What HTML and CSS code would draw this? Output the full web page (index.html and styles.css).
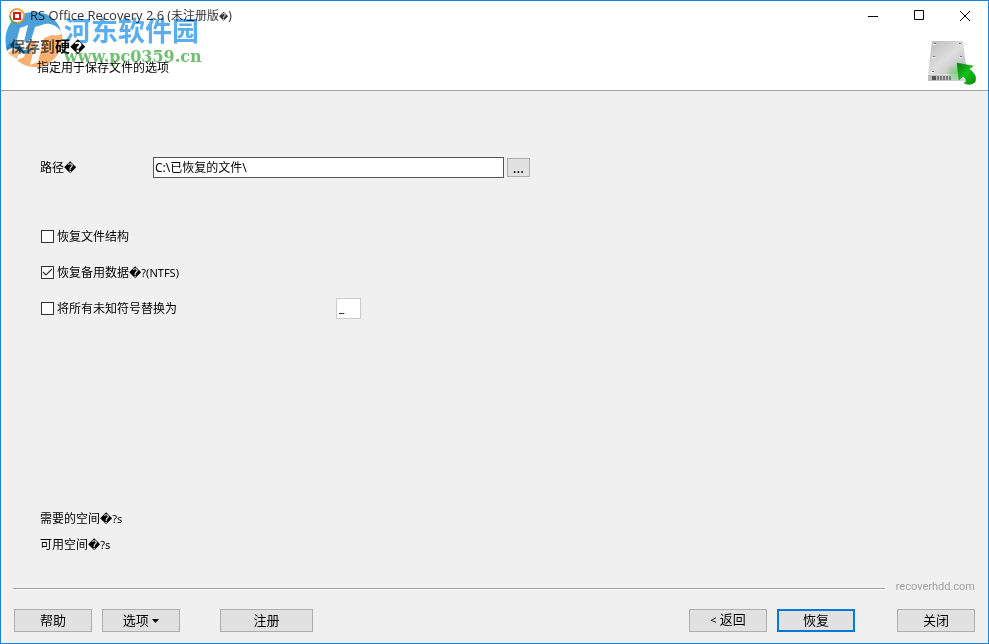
FILE: index.html
```html
<!DOCTYPE html>
<html lang="zh-CN">
<head>
<meta charset="utf-8">
<title>RS Office Recovery 2.6</title>
<link rel="stylesheet" href="styles.css">
</head>
<body>
<div class="window">
  <header class="header">
    <div class="titlebar">
      <svg class="app-icon" viewBox="0 0 16 16" aria-hidden="true">
        <circle cx="8" cy="8" r="7" fill="#fff" stroke="#e98d2c" stroke-width="1.5"/>
        <path d="M1 8a7 7 0 0 0 7 7" fill="none" stroke="#55a83c" stroke-width="1.5"/>
        <path d="M8 1a7 7 0 0 1 7 7" fill="none" stroke="#e3b92c" stroke-width="1.5"/>
        <rect x="5" y="5" width="6" height="6" fill="#fff" stroke="#e01818" stroke-width="2"/>
      </svg>
      <span class="title"><span class="product">RS Office Recovery 2.6</span> (未注册版<span class="bad">�</span>)</span>
      <div class="controls">
        <button class="control" aria-label="最小化"><svg viewBox="0 0 12 12"><path d="M1 6.500h10"/></svg></button>
        <button class="control" aria-label="最大化"><svg viewBox="0 0 12 12"><path d="M1.500 .5h9v9h-9z"/></svg></button>
        <button class="control" aria-label="关闭窗口"><svg viewBox="0 0 12 12"><path d="M1 1l10 10M11 1L1 11"/></svg></button>
      </div>
    </div>
    <div class="intro">
      <div>
        <h1><span class="faded">保存到</span>硬<span class="bad">�</span></h1>
        <p>指定用于保存文件的选项</p>
      </div>
      <svg class="drive" viewBox="0 0 50 46" aria-hidden="true">
        <defs>
          <linearGradient id="metal" x1="0" y1="0" x2="1" y2="1">
            <stop offset="0" stop-color="#b9b9b9"/><stop offset=".5" stop-color="#dedede"/><stop offset="1" stop-color="#b5b5b5"/>
          </linearGradient>
          <linearGradient id="face" x1="0" y1="0" x2="1" y2="0">
            <stop offset="0" stop-color="#bbb"/><stop offset="1" stop-color="#ddd"/>
          </linearGradient>
          <linearGradient id="leaf" x1="0" y1="0" x2="1" y2="1">
            <stop offset="0" stop-color="#087d10"/><stop offset=".5" stop-color="#12c21a"/><stop offset="1" stop-color="#078a0e"/>
          </linearGradient>
          <filter id="glow"><feGaussianBlur stdDeviation="3"/></filter>
        </defs>
        <path d="M6 1h31l4 33H2z" fill="url(#metal)"/>
        <path d="M2 34h39v7H2z" fill="url(#face)"/>
        <path d="M2 34.500h39" stroke="#e6e6e6"/>
        <path d="M6 38h4" stroke="#555" stroke-width="4"/>
        <path d="M11 38h15" stroke="#777" stroke-width="4" stroke-dasharray="2 1"/>
        <path d="M8 3.500h2M33 3.500h2M7 16.500h2M34 16.500h2M6 31.500h2" stroke="#666"/>
        <path d="M7 4.500h3M32 4.500h3M6 17.500h3M33 17.500h3M5 32.500h3" stroke="#fff"/>
        <ellipse cx="30" cy="33" rx="7" ry="6" fill="#5fd35f" opacity=".7" filter="url(#glow)"/>
        <path d="M31 23l16 3-4 3c6 4 8 9 6 13-3 3-8 3-11 1 3-1 3-4-1-7l-4 4z" fill="url(#leaf)" stroke="#078a0e" stroke-width=".5"/>
      </svg>
    </div>
  </header>

  <main class="content">
    <div class="path-row">
      <label for="path">路径<span class="bad">�</span></label>
      <input class="path" id="path" type="text" value="C:\已恢复的文件\">
      <button class="browse" aria-label="浏览">...</button>
    </div>
    <div class="options">
      <label class="option"><input type="checkbox"><span>恢复文件结构</span></label>
      <label class="option"><input type="checkbox" checked><span>恢复备用数据<span class="bad">�</span><span class="latin">?(NTFS)</span></span></label>
      <div class="replace-row">
        <label class="option"><input type="checkbox"><span>将所有未知符号替换为</span></label>
        <input class="symbol" type="text" value="_" aria-label="替换符号">
      </div>
    </div>
    <div class="space">
      <p>需要的空间<span class="bad">�</span><span class="latin">?s</span></p>
      <p>可用空间<span class="bad">�</span><span class="latin">?s</span></p>
    </div>
  </main>

  <footer class="footer">
    <div class="divider"><hr><a href="#">recoverhdd.com</a></div>
    <div class="buttons">
      <button class="btn">帮助</button>
      <button class="btn">选项 <svg class="caret" viewBox="0 0 7 4" aria-hidden="true"><path d="M0 0h7L3.500 4z"/></svg></button>
      <button class="btn register">注册</button>
      <button class="btn back"><span class="latin">&lt;</span> 返回</button>
      <button class="btn primary">恢复</button>
      <button class="btn close">关闭</button>
    </div>
  </footer>

  <div class="watermark" aria-hidden="true">
    <svg class="mark" viewBox="0 0 58 58">
      <path d="M1 37C-2 16 10 2 29 2c14 0 23 7 27 19-5-6-11-8-16-7l-10 3-4 13-7 2 4-17-8 3-5 18C7 32 4 34 1 37z" fill="#4ba0d8"/>
      <path d="M57 24c2 18-10 33-28 33-7 0-13-3-17-7l7-3 4-13 8-3-6 24 8-3 6-24 8-3c4 1 7 0 10-1z" fill="#f9b070"/>
      <path d="M3 43c4-4 8-5 12-3l-3 9c-4-2-7-4-9-6z" fill="#f9bd88"/>
      <path d="M1 37c5-7 11-6 15 1 4 4 9 2 13-2-3 7-9 10-14 6-5-5-9-5-13-1z" fill="#2b84b8"/>
    </svg>
    <div class="mark-text">
      <div class="mark-name">河东软件园</div>
      <div class="mark-url">www.pc0359.cn</div>
    </div>
  </div>
</div>
</body>
</html>
```
FILE: styles.css
```css
* { box-sizing: border-box; }
body {
  margin: 0;
  font: 12px/18px "Noto Sans", "Noto Sans CJK SC", sans-serif;
  color: #000;
}
h1, p { margin: 0; }
button, input { font: inherit; color: inherit; margin: 0; border-radius: 0; }
.bad { font-family: "DejaVu Sans", sans-serif; }
.latin { font-size: 11px; }

.window {
  position: relative;
  display: flex;
  flex-direction: column;
  min-height: 100vh;
  border: 1px solid #1883d7;
  background: #f0f0f0;
}

.header { background: #fff; border-bottom: 1px solid #a0a0a0; }
.titlebar { display: flex; align-items: center; height: 30px; padding-left: 8px; }
.app-icon { position: relative; z-index: 1; width: 16px; height: 16px; margin-right: 5px; }
.title { color: #333; }
.product { font-family: "Open Sans", sans-serif; font-size: 13px; }
.title .bad { font-size: 9px; }
.controls { display: flex; margin-left: auto; }
.control {
  display: grid;
  place-items: center;
  width: 46px;
  height: 30px;
  padding: 0;
  border: 0;
  background: none;
}
.control svg { width: 12px; height: 12px; fill: none; stroke: #000; }
.intro { display: flex; justify-content: space-between; height: 59px; padding: 5px 12px 0 9px; }
.intro h1 { font-size: 15px; line-height: 20px; }
.intro h1 .bad { font-size: 14px; }
.faded { color: #666; }
.intro p { padding-left: 27px; line-height: 22px; }
.drive { width: 50px; height: 46px; margin-top: 4px; }

.content {
  flex: 1;
  display: flex;
  flex-direction: column;
  padding: 66px 39px 0;
}
.path-row { display: flex; align-items: center; }
.path-row label { width: 113px; }
.path { flex: 0 1 351px; height: 21px; padding: 0 1px 2px; border: 1px solid #555; background: #fff; }
.browse { width: 23px; height: 19px; margin-left: 3px; padding: 0; border: 1px solid #adadad; background: #e1e1e1; font-size: 14px; line-height: 16px; }
.options { display: grid; gap: 14px; margin-top: 48px; }
.option { display: flex; align-items: center; height: 22px; }
.option span { line-height: 20px; }
.option input {
  appearance: none;
  width: 13px;
  height: 13px;
  margin: 0 3px 1px 1px;
  border: 1px solid #333;
  background: #fff;
}
.option input:checked {
  background: #fff url("data:image/svg+xml,%3Csvg xmlns='http://www.w3.org/2000/svg' viewBox='0 0 11 11'%3E%3Cpath d='M1 5l3 3 6-6' fill='none' stroke='%23333' stroke-width='1.200'/%3E%3C/svg%3E");
}
.replace-row { display: flex; align-items: flex-start; }
.replace-row .option { width: 296px; }
.symbol { width: 25px; height: 21px; padding: 0 2px 2px; border: 1px solid #ccc; background: #fff; }
.space { display: grid; gap: 8px; margin-top: auto; padding-bottom: 17px; }

.footer { padding: 0 13px 11px 12px; }
.divider { display: flex; align-items: center; gap: 11px; height: 38px; padding-bottom: 6px; }
.divider hr { flex: 1; height: 2px; margin: 4px 0 0; border: 0; border-top: 1px solid #a0a0a0; border-bottom: 1px solid #fff; }
.divider a { color: #a0a0a0; font-family: Roboto, sans-serif; font-size: 11px; text-decoration: none; }
.buttons { display: flex; gap: 10px; margin-left: 1px; }
.btn { width: 78px; height: 23px; padding: 0 0 2px; border: 1px solid #adadad; background: #e1e1e1; font-size: 13px; line-height: 18px; }
.caret { width: 7px; height: 4px; vertical-align: middle; }
.register { width: 93px; margin-left: 30px; }
.back { margin-left: auto; }
.primary { border: 2px solid #0078d7; }
.close { margin-left: 32px; }

.watermark {
  position: absolute;
  top: 9px;
  left: 4px;
  display: flex;
  pointer-events: none;
  mix-blend-mode: multiply;
}
.mark { width: 58px; height: 58px; }
.mark-text { margin-left: 1px; white-space: nowrap; }
.mark-name { color: #5aaef0; font: bold 27px/34px "Noto Sans CJK SC", sans-serif; margin-top: 3px; }
.mark-url { color: #6fbe72; font: bold 16px/20px "DejaVu Serif", serif; }
```
